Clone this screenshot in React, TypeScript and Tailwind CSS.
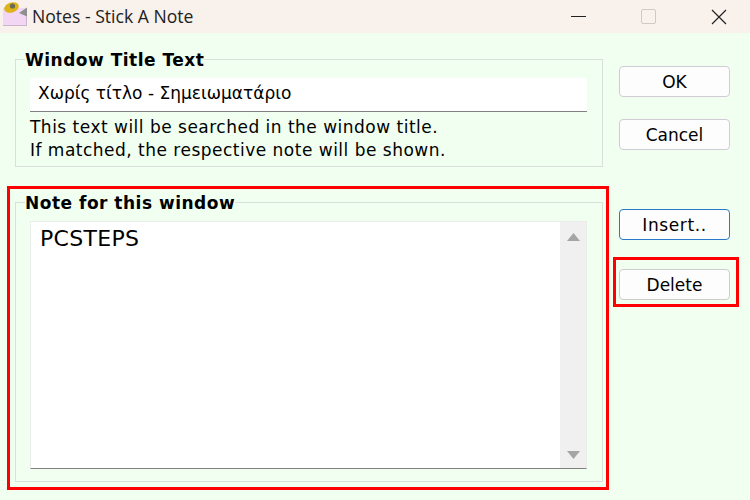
const dejavu = "font-['DejaVu_Sans',sans-serif]";

function Btn({ label, className = "" }: { label: string; className?: string }) {
  return (
    <button className={`h-[31px] w-[111px] rounded-[4px] border bg-[#fdfdfd] pt-[1px] text-[17px] leading-[28px] text-black ${className}`}>
      {label}
    </button>
  );
}

function Group({ title, className, children }: { title: string; className: string; children: React.ReactNode }) {
  return (
    <fieldset className={`m-0 w-[588px] border border-[#d9e0d9] pl-[14px] pr-[15px] ${className}`}>
      <legend className="ml-[-5px] px-0 pt-[2px] text-[17px] font-bold leading-[19px] tracking-[0.5px] text-black">{title}</legend>
      {children}
    </fieldset>
  );
}

export default function App() {
  return (
    <div className={`relative flex h-[500px] w-[750px] flex-col overflow-hidden bg-[#f0fff0] ${dejavu}`}>
      <div className="flex h-[33px] shrink-0 items-center bg-[#f8f1ec]">
        <svg width="25" height="26" viewBox="0 0 25 26" className="ml-[3px] mt-[-2px] overflow-visible">
          <rect x="0" y="5" width="24" height="18" fill="#f3d6f3" />
          <rect x="0" y="22" width="24" height="1" fill="#cdb4cd" />
          <rect x="23" y="8" width="1" height="15" fill="#cdb4cd" />
          <ellipse cx="8.5" cy="4.5" rx="7.5" ry="5" fill="#dcb318" transform="rotate(-18 8.5 4.5)" />
          <circle cx="9.5" cy="3" r="2.6" fill="#6b6a55" />
          <path d="M24 4.5 L16 10 L24 13.5 Z" fill="#8f8f8f" />
        </svg>
        <span className="ml-[4px] font-['Open_Sans',sans-serif] text-[17.6px] text-[#222]">Notes - Stick A Note</span>
        <div className="ml-auto flex items-center">
          <div className="h-px w-[15px] bg-[#222]" />
          <div className="ml-[55px] h-[15px] w-[15px] rounded-[2px] border border-[#cfcac6]" />
          <svg width="16" height="16" viewBox="0 0 16 16" className="ml-[55px] mr-[23px]">
            <path d="M1 1 L15 15 M15 1 L1 15" stroke="#222" strokeWidth="1.2" fill="none" />
          </svg>
        </div>
      </div>

      <div className="flex flex-1 pl-[15px]">
        <div className="flex flex-col">
          <Group title="Window Title Text" className="mt-[16px] h-[118px]">
            <div className="mt-[8px] flex h-[34px] items-center border-b border-b-[#808080] bg-white pb-[2px] pl-[8px] text-[17px] text-black">
              Χωρίς τίτλο - Σημειωματάριο
            </div>
            <p className="mt-[4px] text-[17px] leading-[23px] tracking-[0.49px] text-black">
              This text will be searched in the window title.
              <br />
              If matched, the respective note will be shown.
            </p>
          </Group>

          <Group title="Note for this window" className="mt-[25px] h-[290px]">
            <div className="mt-[8px] flex h-[248px] border border-[#ececec] border-b-[#808080] bg-white">
              <div className="flex-1 pl-[9px] pt-[4px] text-[22px] leading-[26px] tracking-[0.3px] text-black">PCSTEPS</div>
              <div className="flex w-[26px] flex-col items-center justify-between bg-[#f0f0f0] pb-[9px] pt-[11px]">
                <svg width="13" height="8" viewBox="0 0 13 8"><path d="M6.5 0 L13 8 L0 8 Z" fill="#a5a5a5" /></svg>
                <svg width="13" height="8" viewBox="0 0 13 8"><path d="M0 0 L13 0 L6.5 8 Z" fill="#a5a5a5" /></svg>
              </div>
            </div>
          </Group>
        </div>

        <div className="ml-[16px] flex flex-col pt-[33px]">
          <Btn label="OK" className="border-[#d0ccd4]" />
          <Btn label="Cancel" className="mt-[22px] border-[#d0ccd4]" />
          <Btn label="Insert.." className="mt-[59px] border-[#2a78c8] tracking-[0.6px]" />
          <Btn label="Delete" className="mt-[29px] border-[#cfcccc]" />
        </div>
      </div>

      <div className="absolute left-[7px] top-[186px] h-[304px] w-[602px] border-[3px] border-[#ff0000]" />
      <div className="absolute left-[613px] top-[257px] h-[50px] w-[126px] border-[3px] border-[#ff0000]" />
    </div>
  );
}
